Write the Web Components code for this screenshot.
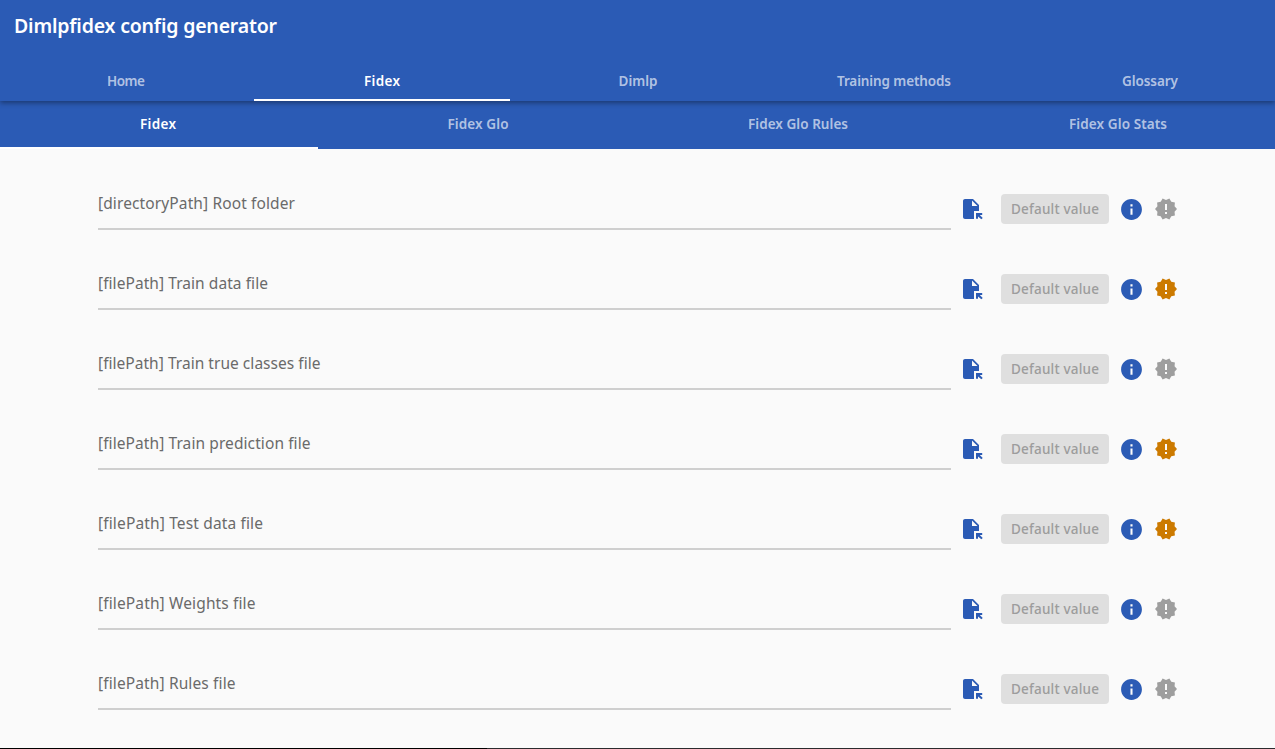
<!DOCTYPE html>
<html lang="en">
<head>
<meta charset="utf-8">
<title>Dimlpfidex config generator</title>
<style>
html, body { margin: 0; height: 100%; overflow: hidden; background: #fafafa; }
body { font-family: "Noto Sans", "Open Sans", sans-serif; }
</style>
</head>
<body>
<config-app></config-app>
<script>
const define = (name, html, setup) => {
  const template = document.createElement('template');
  template.innerHTML = html;
  customElements.define(name, class extends HTMLElement {
    connectedCallback() {
      if (this.shadowRoot) return;
      this.attachShadow({ mode: 'open' }).append(template.content.cloneNode(true));
      if (setup) setup(this, this.shadowRoot);
    }
  });
};

/* Text whose tracking is tuned so it fills the given width. */
define('fit-text', `<style>
  :host { display: inline-block; white-space: pre; }
  span { display: inline-block; }
</style><span><slot></slot></span>`, (el, root) => {
  const span = root.querySelector('span');
  const n = el.textContent.length;
  const w = Number(el.getAttribute('w'));
  const gap = (w - span.getBoundingClientRect().width) / (n - 1);
  span.style.letterSpacing = gap + 'px';
  span.style.marginRight = -gap + 'px';
});

define('tab-item', `<style>
  :host { display: flex; box-sizing: border-box; align-items: center; justify-content: center;
    height: 100%; color: rgba(255,255,255,.65); border-bottom: 2px solid transparent; }
  :host([active]) { color: #fff; border-bottom-color: #fff; }
</style><slot></slot>`);

define('tab-bar', `<style>
  :host { display: grid; grid-auto-flow: column; grid-auto-columns: 1fr; width: 1280px;
    margin-left: -2px; font-size: 13.5px; font-weight: 650; line-height: 20px; }
</style><slot></slot>`);

define('app-header', `<style>
  :host { display: flex; flex-direction: column; position: relative; z-index: 1; height: 101px;
    background: #2b5bb5; box-shadow: 0 2px 5px rgba(0,0,0,.38); }
  h1 { margin: 0; padding: 12px 14px 0; height: 40px; font-size: 19.5px; line-height: 28px; font-weight: 650; color: #fff; }
  .tabs { height: 39px; margin-top: 10px; }
</style><h1><fit-text w="263">Dimlpfidex config generator</fit-text></h1><div class="tabs"><slot></slot></div>`);

define('sub-header', `<style>
  :host { display: block; height: 48px; background: #2b5bb5; }
</style><slot></slot>`);

define('file-icon', `<style>:host { display: block; width: 24px; height: 24px; color: #2b5bb5; } svg { display: block; }</style>
<svg width="24" height="24" viewBox="0 0 24 24" fill="currentColor"><path d="M14 2H6c-1.1 0-1.99.9-1.99 2v16c0 1.1.89 2 1.99 2h9v-8h5V8l-6-6zm-1 7V3.500L18.500 9H13zm4 7h6.200v2h-2.400l2.950 2.950-1.410 1.410L19 19.410v2.240h-2z"/></svg>`);

define('info-icon', `<style>:host { display: block; width: 25px; height: 25px; color: #2b5bb5; } svg { display: block; }</style>
<svg width="25" height="25" viewBox="0 0 24 24" fill="currentColor"><path d="M12 2C6.480 2 2 6.480 2 12s4.480 10 10 10 10-4.480 10-10S17.520 2 12 2zm1 15h-2v-6h2v6zm0-8h-2V7h2v2z"/></svg>`);

define('status-icon', `<style>:host { display: block; width: 24px; height: 24px; color: #9e9e9e; } :host([required]) { color: #cc7a00; } svg { display: block; }</style>
<svg width="24" height="24" viewBox="0 0 24 24" fill="currentColor"><path d="M23 12l-2.440-2.780.340-3.680-3.610-.820-1.890-3.180L12 3 8.600 1.540 6.710 4.720l-3.610.810.340 3.680L1 12l2.440 2.780-.340 3.690 3.610.820 1.890 3.180L12 21l3.400 1.460 1.890-3.180 3.610-.820-.340-3.680L23 12zm-10 5h-2v-2h2v2zm0-4h-2V7h2v6z"/></svg>`);

define('default-button', `<style>
  :host { display: block; }
  button { display: flex; align-items: center; justify-content: center; width: 108px; height: 30px; padding: 0;
    border: 0; border-radius: 4px; background: #dfdfdf; color: #9c9c9c; font: 500 13.5px/20px "Noto Sans", sans-serif; }
</style><button disabled><fit-text w="88">Default value</fit-text></button>`);

define('field-row', `<style>
  :host { display: flex; height: 50px; margin-bottom: 30px; }
  :host > *, .field, file-icon, default-button, info-icon, status-icon { flex: none; }
  .field { box-sizing: border-box; width: 853px; height: 50px; padding-top: 11px; border-bottom: 2px solid #cfcfcf;
    color: #6a6a6a; font-size: 15.500px; line-height: 24px; }
  file-icon { margin: 17px 0 0 8px; }
  default-button { margin: 14px 0 0 18px; }
  info-icon { margin: 17px 0 0 10px; }
  status-icon { margin: 17px 0 0 10px; }
</style><div class="field"><slot></slot></div><file-icon></file-icon><default-button></default-button><info-icon></info-icon>
<status-icon></status-icon>`, (el, root) => {
  root.querySelector('status-icon').toggleAttribute('required', el.hasAttribute('required'));
});

define('config-app', `<style>
  :host { display: flex; flex-direction: column; height: 100vh; overflow: hidden; }
  main { flex: 1; min-height: 0; overflow: hidden; padding: 31px 96px 0 98px; }
  footer { height: 1px; flex: none; background: linear-gradient(90deg, #000 487px, #2b2b2e 487px); }
  tab-bar { height: 100%; }
</style>
<app-header><tab-bar>
  <tab-item><fit-text w="38">Home</fit-text></tab-item>
  <tab-item active><fit-text w="36">Fidex</fit-text></tab-item>
  <tab-item><fit-text w="39">Dimlp</fit-text></tab-item>
  <tab-item><fit-text w="114">Training methods</fit-text></tab-item>
  <tab-item><fit-text w="56">Glossary</fit-text></tab-item>
</tab-bar></app-header>
<sub-header><tab-bar>
  <tab-item active><fit-text w="36">Fidex</fit-text></tab-item>
  <tab-item><fit-text w="61">Fidex Glo</fit-text></tab-item>
  <tab-item><fit-text w="100">Fidex Glo Rules</fit-text></tab-item>
  <tab-item><fit-text w="98">Fidex Glo Stats</fit-text></tab-item>
</tab-bar></sub-header>
<main>
  <field-row><fit-text w="197">[directoryPath] Root folder</fit-text></field-row>
  <field-row required><fit-text w="170">[filePath] Train data file</fit-text></field-row>
  <field-row><fit-text w="222.500">[filePath] Train true classes file</fit-text></field-row>
  <field-row required><fit-text w="212.500">[filePath] Train prediction file</fit-text></field-row>
  <field-row required><fit-text w="165">[filePath] Test data file</fit-text></field-row>
  <field-row><fit-text w="157.500">[filePath] Weights file</fit-text></field-row>
  <field-row><fit-text w="137.500">[filePath] Rules file</fit-text></field-row>
</main>
<footer></footer>`);
</script>
</body>
</html>
